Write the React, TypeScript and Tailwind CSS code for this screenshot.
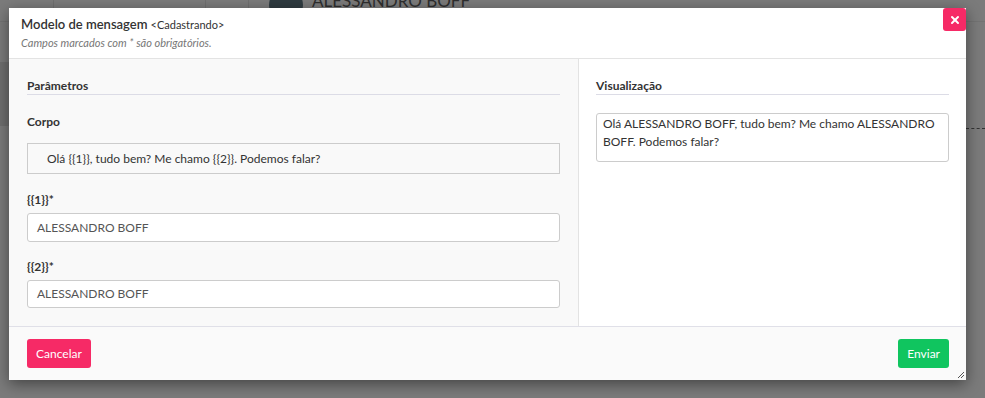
import { X } from 'lucide-react';

const font = "font-['Lato','Open_Sans',sans-serif]";

export default function App() {
  return (
    <div className={`relative h-[398px] w-[985px] overflow-hidden bg-[#7b7b7b] ${font}`}>
      {/* Dimmed page behind the modal */}
      <div className="flex h-[22px] border-b border-[#737373] text-[#5a5a5a]">
        <div className="h-full w-[54px] border-r border-[#707070]" />
        <div className="h-full w-[152px] border-r border-[#707070]" />
        <div className="h-full w-[43px] border-r border-[#707070]" />
        <div className="ml-[20px] mt-[-12px] h-[34px] w-[34px] rounded-full bg-[#2f3b40]" />
        <span className="ml-[9px] mt-[-9px] text-[17px] leading-[20px] text-[#2e2e2e]">ALESSANDRO BOFF</span>
      </div>
      <div className="mt-[40px] h-[64px] w-[250px] bg-[#6f6f6f]" />
      <div className="absolute right-0 top-[128px] w-[19px] border-t border-dashed border-[#333]" />

      {/* Modal */}
      <div className="absolute left-[9px] top-[8px] flex h-[372px] w-[957px] flex-col bg-white shadow-[0_4px_14px_rgba(0,0,0,0.45)]">
        <div className="relative h-[51px] border-b border-[#e3e3e3] pl-[12px] pt-[7px]">
          <div className="flex items-baseline gap-[3px] text-[#333]">
            <span className="text-[13px] font-semibold">Modelo de mensagem</span>
            <span className="text-[11px]">&lt;Cadastrando&gt;</span>
          </div>
          <div className="text-[11px] italic text-[#777]">Campos marcados com * são obrigatórios.</div>
          <button className="absolute right-0 top-0 flex h-[23px] w-[23px] items-center justify-center rounded-[3px] bg-[#f62a66] text-white">
            <X size={12} strokeWidth={4} />
          </button>
        </div>

        <div className="flex flex-1">
          <div className="w-[570px] border-r border-[#e3e3e3] bg-[#f9f9f9] px-[18px] pt-[19px] text-[12px] leading-[16px] text-[#333]">
            <div className="border-b border-[#dcdce6] font-bold">Parâmetros</div>
            <div className="mt-[19px] font-bold">Corpo</div>
            <div className="mt-[13px] flex h-[31px] items-center border border-[#cccccc] pl-[19px] text-[#333]">
              Olá {'{{1}}'}, tudo bem? Me chamo {'{{2}}'}. Podemos falar?
            </div>
            <div className="mt-[18px] font-bold">{'{{1}}'}*</div>
            <div className="mt-[5px] flex h-[29px] items-center rounded-[3px] border border-[#cccccc] bg-white pl-[9px] text-[#555]">
              ALESSANDRO BOFF
            </div>
            <div className="mt-[17px] font-bold">{'{{2}}'}*</div>
            <div className="mt-[5px] flex h-[28px] items-center rounded-[3px] border border-[#cccccc] bg-white pl-[9px] text-[#555]">
              ALESSANDRO BOFF
            </div>
          </div>
          <div className="flex-1 px-[17px] pt-[19px] text-[12px] leading-[16px] text-[#333]">
            <div className="border-b border-[#dcdce6] font-bold">Visualização</div>
            <div className="mt-[18px] h-[49px] rounded-[3px] border border-[#cccccc] px-[6px] pt-[1px] leading-[18px]">
              Olá ALESSANDRO BOFF, tudo bem? Me chamo ALESSANDRO BOFF. Podemos falar?
            </div>
          </div>
        </div>

        <div className="relative flex h-[54px] items-center justify-between border-t border-[#e0e0e8] bg-[#fafafa] pl-[18px] pr-[17px]">
          <button className="h-[29px] rounded-[3px] bg-[#f62a66] px-[9px] text-[12px] text-white">Cancelar</button>
          <button className="h-[29px] rounded-[3px] bg-[#10c55f] px-[9px] text-[12px] text-white">Enviar</button>
          <svg className="absolute bottom-[1px] right-[1px]" width="8" height="8" viewBox="0 0 8 8">
            <path d="M7 1L1 7M7 4L4 7" stroke="#555" strokeWidth="1" />
          </svg>
        </div>
      </div>
    </div>
  );
}
